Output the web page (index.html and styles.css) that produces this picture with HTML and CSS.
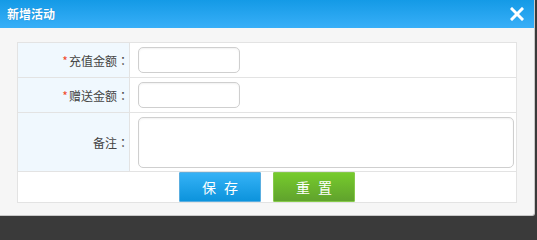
FILE: index.html
```html
<!DOCTYPE html>
<html lang="zh-CN">
<head>
<meta charset="utf-8">
<title>新增活动</title>
<link rel="stylesheet" href="styles.css">
</head>
<body>
<div class="dialog">
  <div class="dialog-head">
    <span class="dialog-title">新增活动</span>
    <span class="dialog-close" aria-label="关闭">
      <svg width="14" height="14" viewBox="0 0 14 14"><path d="M2 2 L12 12 M12 2 L2 12" stroke="#fff" stroke-width="3" stroke-linecap="square"/></svg>
    </span>
  </div>
  <div class="dialog-body">
    <table class="form-table">
      <tr class="row-std">
        <th class="label"><span class="req">*</span>充值金额<span class="colon" lang="ja">：</span></th>
        <td class="field"><input class="text-input" type="text"></td>
      </tr>
      <tr class="row-std">
        <th class="label"><span class="req">*</span>赠送金额<span class="colon" lang="ja">：</span></th>
        <td class="field"><input class="text-input" type="text"></td>
      </tr>
      <tr class="row-note">
        <th class="label">备注<span class="colon" lang="ja">：</span></th>
        <td class="field"><textarea class="text-area"></textarea></td>
      </tr>
      <tr class="row-actions">
        <td class="actions" colspan="2">
          <div class="btn-group">
            <button class="btn btn-save" type="button">保存</button>
            <button class="btn btn-reset" type="button">重置</button>
          </div>
        </td>
      </tr>
    </table>
  </div>
</div>
</body>
</html>
```

FILE: styles.css
```css
html, body {
  margin: 0;
  padding: 0;
}
html {
  background: #3a3a3a;
}
body {
  width: 537px;
  height: 220px;
  overflow: hidden;
  font-family: "Noto Sans CJK SC", "Liberation Sans", sans-serif;
}
.dialog {
  width: 534px;
  height: 215px;
  background: #f6f6f6;
  border-right: 1px solid #c9c9c9;
  border-bottom: 1px solid #c9c9c9;
  border-bottom-right-radius: 3px;
  overflow: hidden;
}
.dialog-head {
  height: 28px;
  background: linear-gradient(to bottom, #149ae6, #38aff8);
  display: flex;
  align-items: center;
  justify-content: space-between;
  padding: 0 10px 0 7px;
}
.dialog-title {
  color: #fff;
  font-size: 12px;
  font-weight: bold;
  text-shadow: 0 0 1px rgba(0, 60, 120, 0.35);
  line-height: 28px;
}
.dialog-close {
  display: flex;
  width: 14px;
  height: 14px;
  margin-top: -1px;
}
.dialog-body {
  padding: 14px 0 0 17px;
}
.form-table {
  border-collapse: collapse;
  width: 500px;
  background: #fff;
}
.form-table th,
.form-table td {
  border: 1px solid #e3e3e3;
  padding: 0;
}
.label {
  width: 111px;
  background: #f0f8fe;
  text-align: right;
  font-weight: normal;
  font-size: 12px;
  color: #444;
  white-space: nowrap;
}
.colon {
  font-family: "Noto Sans CJK JP", "Noto Sans CJK SC", sans-serif;
}
.req {
  color: #f04a2a;
  margin-right: 1px;
}
.field {
  padding-left: 8px !important;
  vertical-align: middle;
}
.row-std {
  height: 35px;
}
.row-note {
  height: 59px;
}
.text-input {
  display: block;
  box-sizing: border-box;
  width: 102px;
  height: 26px;
  border: 1px solid #cfcfcf;
  border-radius: 5px;
  box-shadow: inset 0 1px 2px rgba(0, 0, 0, 0.06);
  margin: 0;
  padding: 0 4px;
  background: #fff;
}
.text-area {
  display: block;
  box-sizing: border-box;
  width: 376px;
  height: 51px;
  border: 1px solid #cfcfcf;
  border-radius: 5px;
  box-shadow: inset 0 1px 2px rgba(0, 0, 0, 0.06);
  margin: 0;
  padding: 4px;
  resize: none;
  background: #fff;
}
.actions {
  height: 30px;
}
.btn-group {
  display: flex;
  justify-content: center;
  gap: 12px;
}
.btn {
  box-sizing: border-box;
  width: 82px;
  height: 30px;
  margin: 0;
  padding: 0 0 0 8px;
  border-radius: 1px;
  color: #fff;
  font-family: "Noto Sans CJK SC", "Liberation Sans", sans-serif;
  font-size: 14px;
  letter-spacing: 8px;
  cursor: pointer;
}
.btn-save {
  border: 1px solid #5aaee0;
  background: linear-gradient(to bottom, #35b2f6, #0c93dc);
}
.btn-reset {
  border: 1px solid #86c94a;
  background: linear-gradient(to bottom, #76cb2c, #60a22d);
}
```
